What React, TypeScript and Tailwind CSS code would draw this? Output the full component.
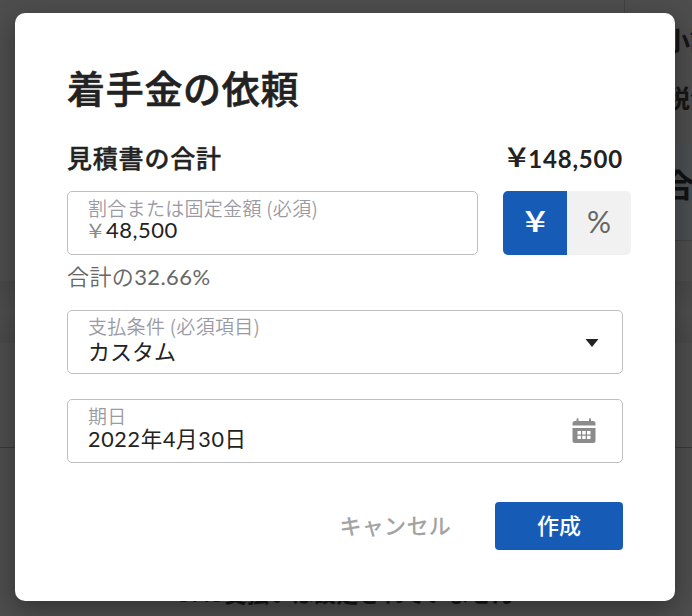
import type { ReactNode } from "react";

const jp = "font-['Noto_Sans_CJK_JP',sans-serif]";
const latin = "font-['Lato','Noto_Sans_CJK_JP',sans-serif]";

function Field({ label, children, icon, className }: { label: ReactNode; children: ReactNode; icon?: ReactNode; className: string }) {
  return (
    <div className={`flex h-16 shrink-0 items-center justify-between rounded-[5px] border border-[#bfbfc1] pl-5 ${className}`}>
      <div className="flex h-full flex-col">{label}{children}</div>
      {icon}
    </div>
  );
}

const labelText = "h-[22px] whitespace-nowrap text-[19px] font-[350] leading-[22px] tracking-[0.3px] text-[#9a9aa3]";

function CalendarIcon() {
  return (
    <svg width="24" height="26" viewBox="0 0 24 26" fill="#8b8b8b" className="mr-[26px]">
      <path d="M4.500 3V1.200Q4.500 .2 5.500 .2T6.500 1.200V3h10.500V1.200q0-1 1-1t1 1V3H21q2.500 0 2.500 2.500V7.500H.5V5.500Q.5 3 3 3Z" />
      <path fillRule="evenodd" d="M.5 10h23v12.500q0 2.500-2.500 2.500H3Q.5 25 .5 22.500ZM5.500 13v3.400H9V13Zm4.700 0v3.400h3.500V13ZM15 13v3.400h3.500V13ZM5.500 17.700V21H9v-3.300Zm4.700 0V21h3.500v-3.300ZM15 17.700V21h3.500v-3.300Z" />
    </svg>
  );
}

export default function App() {
  return (
    <div className={`relative h-[616px] w-[692px] overflow-hidden bg-[#4d4d4d] ${jp}`}>
      <div className="absolute inset-x-0 top-[281px] h-[62px] bg-linear-to-b from-[#484848] via-[#4d4d4d] to-[#494949]" />
      <div className="absolute inset-x-0 top-[447px] h-px bg-[#383838]" />
      <div className="absolute left-[624px] top-0 h-[241px] w-[68px] border-b border-l border-[#414141]" />
      <div className="absolute left-[625px] top-[144px] h-[96px] w-[67px] bg-[#4b4e51]" />
      <div className="absolute left-[665px] top-[21px] whitespace-nowrap text-[25px] font-bold leading-9 text-[#151515]">小計</div>
      <div className="absolute left-[665px] top-[79px] whitespace-nowrap text-[25px] font-bold leading-9 text-[#151515]">税金</div>
      <div className="absolute left-[662px] top-[160px] whitespace-nowrap text-[32px] font-bold leading-[46px] text-[#101112]">合計</div>
      <div className="absolute left-[177px] top-[574px] whitespace-nowrap text-[22px] font-bold leading-9 tracking-[0.4px] text-[#151515]">SMS支払いは設定されていません</div>

      <main className="absolute left-[15px] top-[13px] flex h-[588px] w-[660px] flex-col rounded-[10px] bg-white pl-[52px] pt-[45px] shadow-[0_8px_24px_rgba(0,0,0,0.35)]">
        <h1 className="h-[58px] whitespace-nowrap text-[38px] font-medium leading-[58px] tracking-[0.7px] text-[#222] [-webkit-text-stroke:0.6px_#222]">着手金の依頼</h1>
        <div className="mt-[23px] flex h-9 w-[556px] items-center justify-between whitespace-nowrap text-[#222]">
          <h2 className="text-[25px] font-medium leading-9 tracking-[0.8px] [-webkit-text-stroke:0.4px_#222]">見積書の合計</h2>
          <div className="flex items-center pt-[3px] leading-9">
            <span className="mb-[6px] mr-[4px] inline-block scale-x-[1.3] text-[27px] font-medium">¥</span>
            <span className="font-['Lato'] text-[24px] font-bold tracking-[0.8px]">148,500</span>
          </div>
        </div>
        <div className="mt-4 flex h-16 shrink-0">
          <Field className="w-[411px]" label={<div className={`mt-[5px] ${labelText}`}>割合または固定金額 (必須)</div>}>
            <div className="flex h-[22px] items-center leading-[22px]">
              <span className="w-[18px]"><span className="ml-[2px] inline-block scale-x-[1.3] text-[20px] font-[350] text-[#8b8b8b]">¥</span></span>
              <span className="font-['Lato'] text-[22px] tracking-[0.5px] text-[#222]">48,500</span>
            </div>
          </Field>
          <div className="ml-[25px] flex w-32 overflow-hidden rounded-[5px] text-[30px] leading-[62px]">
            <button className="flex h-16 w-16 justify-center bg-[#165cb6] text-[29px] font-medium leading-[56px] text-white"><span className="inline-block scale-x-[1.3]">¥</span></button>
            <button className="flex h-16 w-16 justify-center bg-[#f1f1f1] font-['Lato'] leading-[61px] text-[#666]">%</button>
          </div>
        </div>
        <p className={`mt-[4px] h-8 text-[22px] leading-8 tracking-[0.4px] text-[#666] ${latin}`}><span className="font-['Noto_Sans_CJK_JP'] font-[350]">合計の</span>32.66%</p>
        <Field className="mt-[19px] w-[556px]" label={<div className={`mt-[4px] ${labelText}`}>支払条件 (必須項目)</div>} icon={<svg width="14" height="8" viewBox="0 0 14 8" className="mr-[23px] mt-px"><path d="M.5 0h13L7 8Z" fill="#222" /></svg>}>
          <div className="mt-px h-6 text-[22px] leading-6 text-[#222]">カスタム</div>
        </Field>
        <Field className="mt-[25px] w-[556px]" label={<div className={`mt-[5px] ${labelText}`}>期日</div>} icon={<CalendarIcon />}>
          <div className={`mt-px h-[22px] text-[21.500px] leading-[22px] tracking-[0.7px] text-[#222] ${latin}`}>2022年4月30日</div>
        </Field>
        <div className="mt-[39px] flex h-12 w-[556px] items-center justify-end">
          <button className="mr-[44px] -mt-[4px] whitespace-nowrap text-[22px] font-medium tracking-[0.3px] text-[#a3a3a3]">キャンセル</button>
          <button className="h-12 w-32 rounded-[4px] bg-[#165cb6] pb-[4px] text-[22px] font-medium leading-[42px] text-white">作成</button>
        </div>
      </main>
    </div>
  );
}
